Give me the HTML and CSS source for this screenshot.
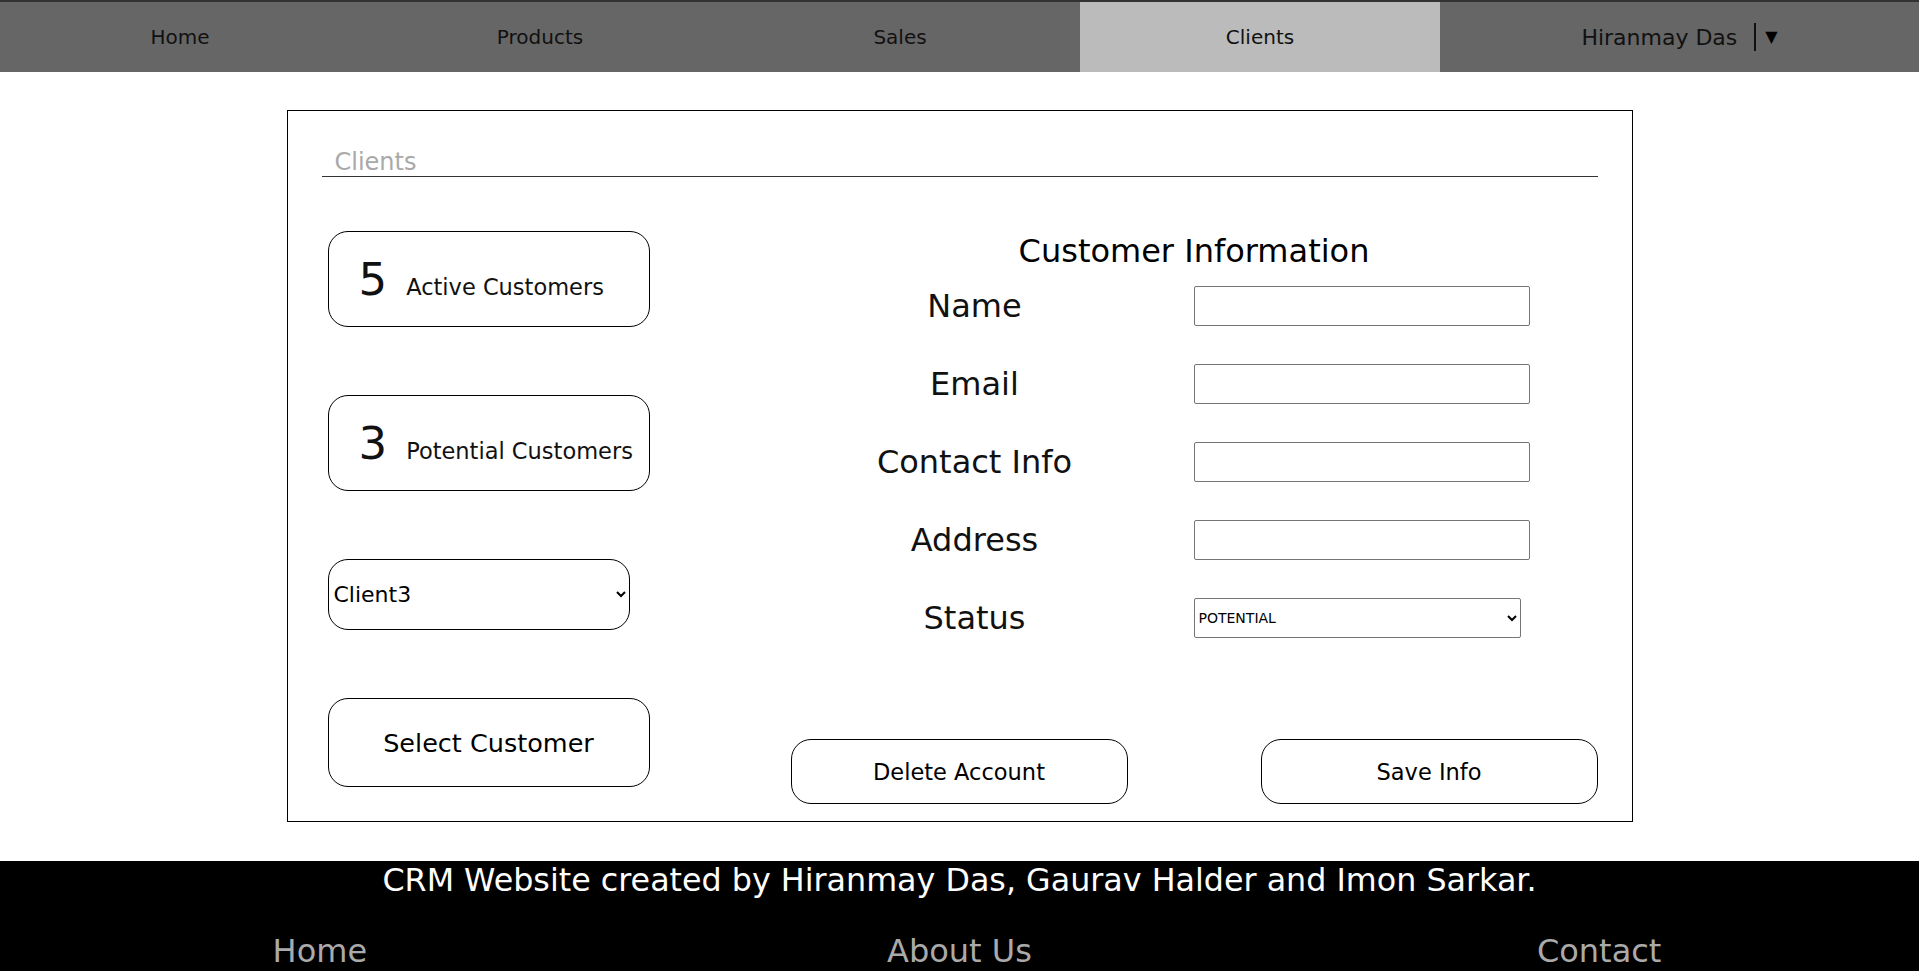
FILE: index.html
```html
<!DOCTYPE html>
<html lang="en">
<head>
  <meta charset="UTF-8" />
  <meta name="viewport" content="width=device-width, initial-scale=1.0" />
  <title>Clients</title>
  <link rel="stylesheet" href="styles.css">
</head>
<body>
  <nav class="topnav">
    <a href="#">Home</a>
    <a href="#">Products</a>
    <a href="#">Sales</a>
    <a href="#" class="active">Clients</a>
    <div class="user-menu">
      <span class="user-name">Hiranmay Das</span>
      <span class="user-toggle">▼</span>
    </div>
  </nav>

  <div class="clients-page">
    <div class="page-title">Clients</div>
    <div class="clients-body">
      <div class="client-list">
        <div class="stat-box">
          <div class="stat-line"><span class="stat-num">5</span><span class="stat-label">Active Customers</span></div>
        </div>
        <div class="stat-box">
          <div class="stat-line"><span class="stat-num">3</span><span class="stat-label">Potential Customers</span></div>
        </div>
        <select class="client-select" id="clientSelect">
          <option>Client1</option>
          <option>Client2</option>
          <option selected>Client3</option>
          <option>Client4</option>
        </select>
        <button class="select-btn">Select Customer</button>
      </div>

      <div class="customer-info">
        <h2>Customer Information</h2>
        <div class="info-grid">
          <label for="name">Name</label>
          <input type="text" id="name">
          <label for="email">Email</label>
          <input type="text" id="email">
          <label for="contact">Contact Info</label>
          <input type="text" id="contact">
          <label for="address">Address</label>
          <input type="text" id="address">
          <label for="status">Status</label>
          <select id="status" class="status-select">
            <option>ACTIVE</option>
            <option selected>POTENTIAL</option>
          </select>
        </div>
        <div class="info-actions">
          <button class="action-btn">Delete Account</button>
          <button class="action-btn">Save Info</button>
        </div>
      </div>
    </div>
  </div>

  <footer class="footer">
    <p>CRM Website created by Hiranmay Das, Gaurav Halder and Imon Sarkar.</p>
    <div class="footer-links">
      <a href="#">Home</a>
      <a href="#">About Us</a>
      <a href="#">Contact</a>
    </div>
  </footer>
</body>
</html>
```

FILE: styles.css
```css
body { margin: 0; padding: 0; font-family: "DejaVu Sans", sans-serif; color: #111; background: #fff; }

/* top navigation */
.topnav { display: grid; grid-template-columns: repeat(4, 360px) 1fr; height: 70px; background: #666; border-top: 2px solid #333; }
.topnav a { display: flex; align-items: center; justify-content: center; color: #111; text-decoration: none; font-size: 20px; }
.topnav a.active { background: #bbb; }
.user-menu { display: flex; align-items: center; justify-content: center; }
.user-name { font-size: 22px; color: #111; }
.user-toggle { margin-left: 17px; padding-left: 9px; border-left: 2px solid #111; height: 28px; line-height: 28px; font-size: 16px; color: #000; }

/* clients card */
.clients-page { box-sizing: border-box; width: 1346px; margin: 38px auto 39px; border: 1px solid #000; padding: 37px 34px 17px; }
.page-title { font-size: 24px; line-height: 28px; color: #a9a9a9; padding-left: 13px; border-bottom: 1px solid #333; }
.clients-body { display: flex; justify-content: space-between; align-items: flex-start; padding-top: 54px; }

.client-list { display: flex; flex-direction: column; gap: 68px; margin-left: 6px; width: 322px; }
.stat-box { box-sizing: border-box; height: 96px; border: 1px solid #000; border-radius: 20px; display: flex; align-items: center; padding: 1px 0 0 30px; }
.stat-line { line-height: 1; white-space: nowrap; }
.stat-num { font-size: 45px; }
.stat-label { font-size: 22.5px; margin-left: 19px; }
.client-select { box-sizing: border-box; width: 302px; height: 71px; border: 1px solid #000; border-radius: 20px; background: #fff; font-family: inherit; font-size: 22px; color: #000; padding-left: 1px; }
.select-btn { box-sizing: border-box; width: 322px; height: 89px; border: 1px solid #000; border-radius: 20px; background: #fff; font-family: inherit; font-size: 25.5px; color: #000; cursor: pointer; }

.customer-info { width: 807px; }
.customer-info h2 { margin: 0 0 15px; font-size: 32px; line-height: 40px; font-weight: normal; text-align: center; color: #000; }
.info-grid { display: grid; grid-template-columns: 368px 336px; column-gap: 35px; row-gap: 38px; align-items: center; }
.info-grid label { text-align: center; font-size: 32px; color: #111; }
.info-grid input { box-sizing: border-box; height: 40px; border: 1px solid #767676; border-radius: 2px; font-family: inherit; font-size: 16px; }
.status-select { box-sizing: border-box; width: 327px; height: 40px; border: 1px solid #767676; border-radius: 2px; background: #fff; font-family: inherit; font-size: 14px; color: #000; }
.info-actions { display: flex; justify-content: space-between; margin-top: 101px; }
.action-btn { box-sizing: border-box; width: 337px; height: 65px; border: 1px solid #000; border-radius: 20px; background: #fff; font-family: inherit; font-size: 22.5px; color: #000; cursor: pointer; }

/* footer */
.footer { background: #000; color: #fff; padding-bottom: 20px; }
.footer p { margin: 0; font-size: 31.75px; line-height: 38px; text-align: center; }
.footer-links { display: grid; grid-template-columns: repeat(3, 1fr); margin-top: 33px; }
.footer-links a { text-align: center; color: #aaa; text-decoration: none; font-size: 32px; line-height: 38px; }
```
